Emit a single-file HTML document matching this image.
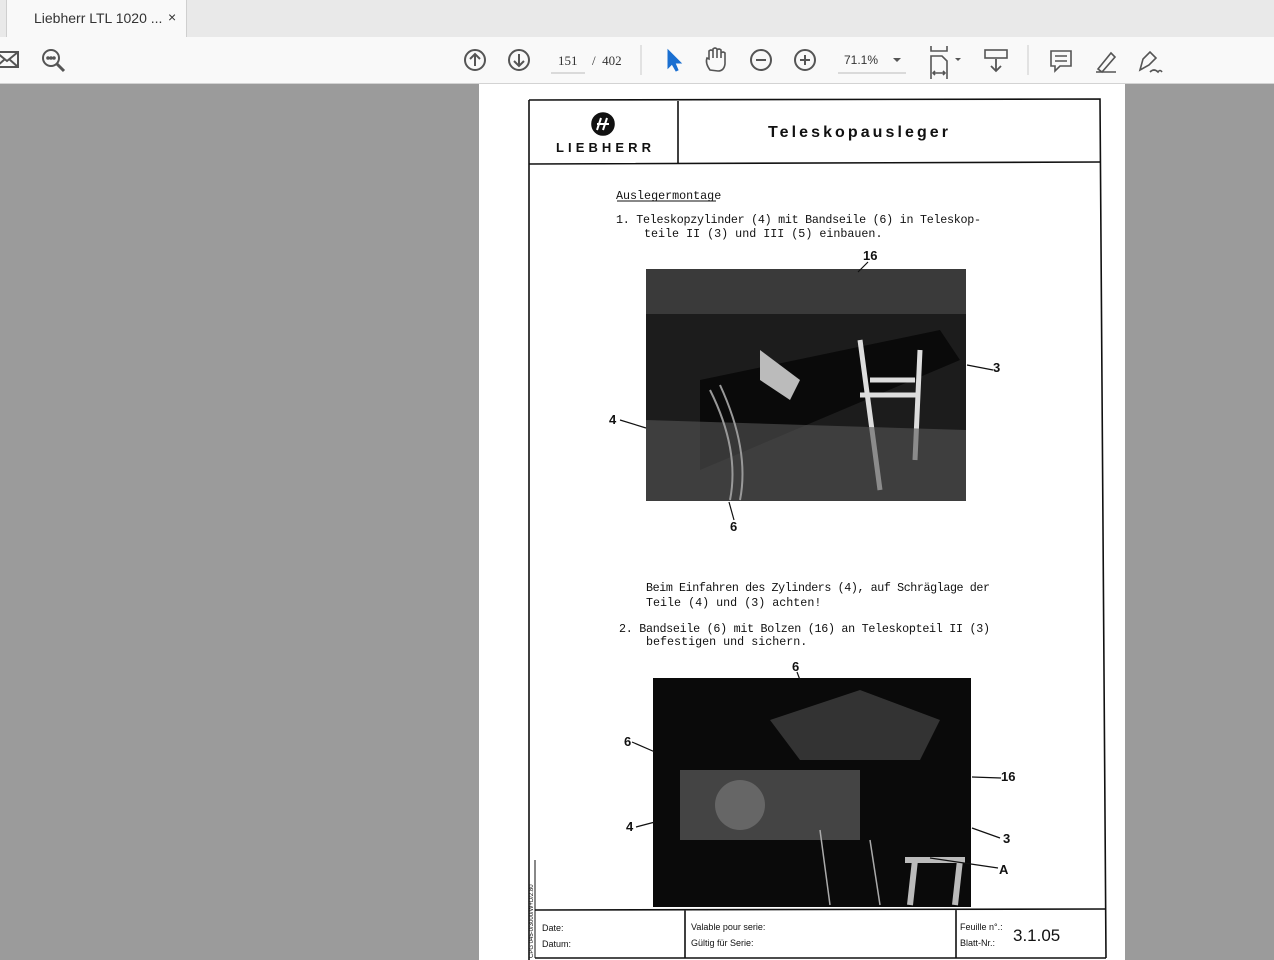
<!DOCTYPE html>
<html><head><meta charset="utf-8"><style>
body{margin:0;width:1274px;height:960px;overflow:hidden;background:#9b9b9b;font-family:"Liberation Sans",sans-serif;position:relative}
.tabbar{position:absolute;left:0;top:0;width:1274px;height:37px;background:#e9e9e9;border-bottom:1px solid #cfcfcf}
.tab{position:absolute;left:6px;top:0;width:179px;height:37px;background:#f9f9f9;border-left:1px solid #cfcfcf;border-right:1px solid #cfcfcf;font-size:14px;color:#333}
.tool{position:absolute;left:0;top:37px;width:1274px;height:46px;background:#f9f9f9;border-bottom:1px solid #d3d3d3}
.m{font-family:"Liberation Mono",monospace}
.s{font-family:"Liberation Sans",sans-serif}
</style></head><body>
<div class="tabbar"><div class="tab"><span style="position:absolute;left:27px;top:10px">Liebherr LTL 1020 ...</span><span style="position:absolute;left:161px;top:9px;font-size:14px">×</span></div></div>
<div class="tool">
<svg width="1274" height="46" style="position:absolute;left:0;top:0" fill="none" stroke="#555" stroke-width="2">
<rect x="-4" y="15" width="22" height="15"/><path d="M-4 15 L7 24 L18 15 M-4 30 L5 22 M18 30 L9 22"/>
<circle cx="51" cy="21" r="8"/><path d="M57 27 L64 34" stroke-width="3"/><circle cx="48" cy="21" r=".8" fill="#555"/><circle cx="51" cy="21" r=".8" fill="#555"/><circle cx="54" cy="21" r=".8" fill="#555"/>
<circle cx="475" cy="23" r="10"/><path d="M475 29 V17 M470 22 L475 17 L480 22"/>
<circle cx="519" cy="23" r="10"/><path d="M519 17 V29 M514 24 L519 29 L524 24"/>
<path d="M551 36 H585" stroke="#bbb" stroke-width="1"/>
<path d="M641 8 V38 M1028 8 V38" stroke="#ccc" stroke-width="1"/>
<path d="M668 13 L668 31 L672 27 L676 34 L678 33 L675 26 L681 26 Z" fill="#1a6fd1" stroke="#1a6fd1" stroke-width="1"/>
<path d="M710 33 Q705 26 707 21 L709 22 V14 Q711 12 713 14 V21 V12 Q715 10 717 12 V21 V13 Q719 11 721 13 V21 V16 Q723 14 725 16 V27 Q724 34 718 34 Z" stroke-width="1.6"/>
<circle cx="761" cy="23" r="10"/><path d="M756 23 H766"/>
<circle cx="805" cy="23" r="10"/><path d="M800 23 H810 M805 18 V28"/>
<path d="M838 36 H906" stroke="#bbb" stroke-width="1"/>
<path d="M893 21 L897 25 L901 21 Z" fill="#555" stroke="none"/>
<path d="M931 9 V14 H947 V9 M931 42 V19 H942 L947 24 V42 M933 36 H945 M935 34 L933 36 L935 38 M943 34 L945 36 L943 38" stroke-width="1.6"/>
<path d="M955 21 L958 24 L961 21 Z" fill="#555" stroke="none"/>
<rect x="985" y="13" width="22" height="8" stroke-width="1.6"/><path d="M996 22 V34 M991 29 L996 34 L1001 29" stroke-width="1.8"/>
<path d="M1051 14 H1071 V29 H1060 L1055 34 V29 H1051 Z" stroke-width="1.6"/><path d="M1055 19 H1067 M1055 24 H1067" stroke-width="1.4"/>
<path d="M1098 32 L1111 16 L1115 20 L1102 35 Z M1096 35 H1116" stroke-width="1.6"/>
<path d="M1140 33 L1143 22 L1150 15 L1156 21 L1149 28 Z M1150 35 Q1154 31 1158 35 Q1160 32 1162 35" stroke-width="1.6"/>
</svg>
<span style="position:absolute;left:558px;top:16px;font-family:'Liberation Serif',serif;font-size:13px;color:#333">151</span>
<span style="position:absolute;left:592px;top:16px;font-family:'Liberation Serif',serif;font-size:13px;color:#333">/&nbsp;&nbsp;402</span>
<span style="position:absolute;left:844px;top:16px;font-size:12px;color:#333">71.1%</span>
</div>
<div style="position:absolute;left:479px;top:84px;width:646px;height:876px;background:#fff"></div>
<svg width="1274" height="960" style="position:absolute;left:0;top:0" fill="none" stroke="#111" stroke-width="1.6">
<path d="M529 100 L1100 99 L1106 958 M529 100 L529 960"/>
<path d="M529 164 L1101 162 M678 101 L678 164"/>
<path d="M535 910 L1106 909 M685 910 V958 M956 910 V958 M535 958 L1106 958"/>
<path d="M535 860 V958" stroke-width="1"/>
<circle cx="603" cy="124" r="11" fill="#111"/>
<path d="M597 130 L601 118 M603 130 L607 118 M597 124 H609" stroke="#fff" stroke-width="2"/>
<text class="s" x="556" y="152" font-weight="bold" font-size="13" fill="#111" stroke="none" textLength="95">LIEBHERR</text>
<text class="s" x="768" y="137" font-weight="bold" font-size="16" fill="#111" stroke="none" textLength="180">Teleskopausleger</text>
<g class="m" font-size="11.7" fill="#111" stroke="none">
<text x="616" y="199">Auslegermontage</text>
<text x="616" y="223" textLength="365">1.  Teleskopzylinder (4) mit Bandseile (6) in Teleskop-</text>
<text x="644" y="237">teile II (3) und III (5) einbauen.</text>
<text x="646" y="591" textLength="344">Beim Einfahren des Zylinders (4), auf Schräglage der</text>
<text x="646" y="606">Teile (4) und (3) achten!</text>
<text x="619" y="632" textLength="371">2.  Bandseile (6) mit Bolzen (16) an Teleskopteil II (3)</text>
<text x="646" y="645">befestigen und sichern.</text>
</g>
<path d="M617 201 H716" stroke-width="1"/>
<!-- photo1 -->
<rect x="646" y="269" width="320" height="232" fill="#1c1c1c" stroke="none"/>
<rect x="646" y="269" width="320" height="45" fill="#3a3a3a" stroke="none"/>
<path d="M700 380 L940 330 L960 360 L700 470 Z" fill="#0a0a0a" stroke="none"/>
<path d="M860 340 L880 490 M920 350 L915 460 M860 395 H920 M870 380 H915" stroke="#ddd" stroke-width="5"/>
<path d="M760 350 L800 380 L790 400 L760 380Z" fill="#bbb" stroke="none"/>
<path d="M646 420 L966 430 L966 501 L646 501Z" fill="#555" stroke="none" opacity=".6"/>
<path d="M710 390 Q740 450 730 500 M720 385 Q750 450 740 500" stroke="#999" stroke-width="2"/>
<!-- photo2 -->
<rect x="653" y="678" width="318" height="229" fill="#0a0a0a" stroke="none"/>
<path d="M770 720 L860 690 L940 720 L920 760 L800 760Z" fill="#333" stroke="none"/>
<path d="M680 770 H860 V840 H680Z" fill="#444" stroke="none"/>
<circle cx="740" cy="805" r="25" fill="#666" stroke="none"/>
<path d="M910 905 L915 860 H960 L955 905 M905 860 H965" stroke="#bbb" stroke-width="6"/>
<path d="M870 840 L880 905 M820 830 L830 905" stroke="#aaa" stroke-width="1.5"/>
<g stroke-width="1.2">
<path d="M868 262 L858 272 M967 365 L993 370 M620 420 L646 428 M729 502 L734 520 M797 672 L800 680 M632 742 L655 752 M972 777 L1001 778 M636 827 L655 822 M972 828 L1000 838 M930 858 L998 868"/>
</g>
<g class="s" font-weight="bold" font-size="13" fill="#111" stroke="none">
<text x="863" y="260">16</text><text x="993" y="372">3</text><text x="609" y="424">4</text><text x="730" y="531">6</text>
<text x="792" y="671">6</text><text x="624" y="746">6</text><text x="1001" y="781">16</text><text x="626" y="831">4</text><text x="1003" y="843">3</text><text x="999" y="874">A</text>
</g>
<g class="s" font-size="9" fill="#111" stroke="none">
<text x="542" y="931">Date:</text><text x="542" y="947">Datum:</text>
<text x="691" y="930">Valable pour serie:</text><text x="691" y="946">Gültig für Serie:</text>
<text x="960" y="930">Feuille n°.:</text><text x="960" y="946">Blatt-Nr.:</text>
</g>
<text class="s" x="1013" y="941" font-size="17" fill="#111" stroke="none">3.1.05</text>
<text class="s" transform="translate(533,958) rotate(-90)" font-size="6" fill="#111" stroke="none">CPG 045-0/3000/W+D/2.80</text>
</svg>
</body></html>
